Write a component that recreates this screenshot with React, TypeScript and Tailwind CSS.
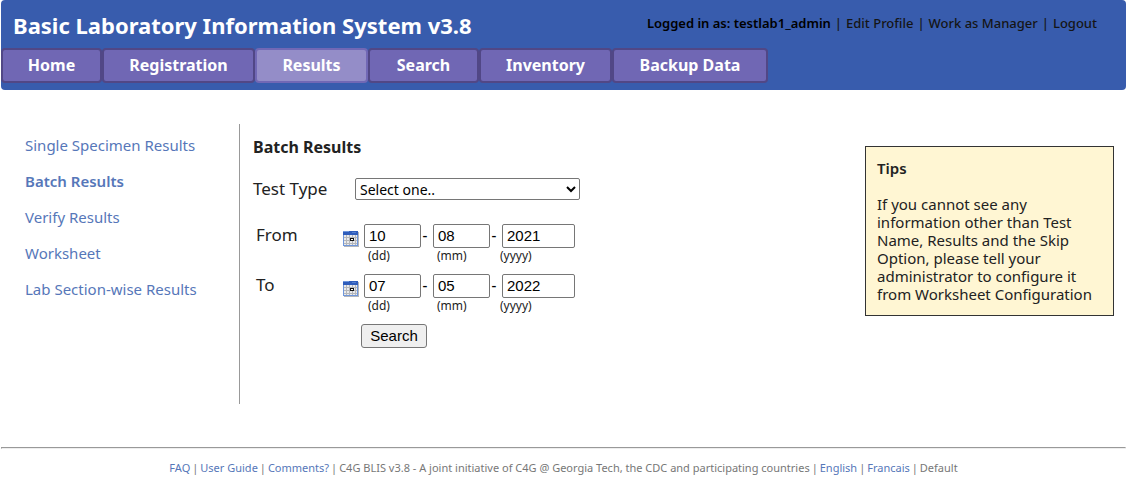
import React from "react";

const tabs = [
  { label: "Home", width: "w-[101px]" },
  { label: "Registration", width: "w-[153px]" },
  { label: "Results", width: "w-[113px]", active: true },
  { label: "Search", width: "w-[111px]" },
  { label: "Inventory", width: "w-[133px]" },
  { label: "Backup Data", width: "w-[156px]" },
];

const sideLinks = [
  "Single Specimen Results",
  "Batch Results",
  "Verify Results",
  "Worksheet",
  "Lab Section-wise Results",
];

function CalendarIcon() {
  return (
    <svg width="16" height="16" viewBox="0 0 16 16" shapeRendering="crispEdges" aria-hidden="true">
      <rect x="1" y="1" width="15" height="15" fill="#b4b6ba" />
      <rect x="0" y="0" width="15" height="15" fill="#6f97dc" />
      <rect x="1" y="4" width="13" height="10" fill="#e9eaec" />
      <rect x="0" y="0" width="15" height="4" fill="#2f5dbb" />
      <rect x="0" y="0" width="6" height="1" fill="#6f97dc" />
      <rect x="9" y="1" width="4" height="1" fill="#5580d0" />
      <path d="M1 6h13v1H1zM1 9h13v1H1zM1 12h13v1H1zM3 4h1v10H3zM6 4h1v10H6zM9 4h1v10H9zM12 4h1v10H12z" fill="#b4b6ba" />
      <rect x="7" y="7" width="4" height="3" fill="#111" />
      <rect x="8" y="8" width="2" height="1" fill="#fff" />
    </svg>
  );
}

function DatePart({ id, label, value, wide }: { id: string; label: string; value: string; wide?: boolean }) {
  return (
    <div className="flex flex-col">
      <input
        id={id}
        defaultValue={value}
        className={`${wide ? "w-[73px]" : "w-[57px]"} h-6 rounded-xs border border-[#767676] bg-white px-1 pb-0.5 font-['Liberation_Sans',sans-serif] text-[15px] text-black`}
      />
      <label htmlFor={id} className={`${wide ? "-ml-1" : "ml-0.5"} px-0.5 text-[12px] leading-4`}>
        {label}
      </label>
    </div>
  );
}

function DateRow({ name, id, parts }: { name: string; id: string; parts: [string, string, string] }) {
  return (
    <fieldset className="flex h-[50px] items-start">
      <legend className="float-left w-[90px] pl-[3px] text-[17px] leading-[22px]">{name}</legend>
      <button type="button" aria-label={`Pick ${name} date`} className="mt-[7px] mr-[5px]">
        <CalendarIcon />
      </button>
      <DatePart id={`${id}-day`} label="(dd)" value={parts[0]} />
      <span className="w-3 pr-1 text-center leading-[22px] font-medium text-black">-</span>
      <DatePart id={`${id}-month`} label="(mm)" value={parts[1]} />
      <span className="w-3 pr-1 text-center leading-[22px] font-medium text-black">-</span>
      <DatePart id={`${id}-year`} label="(yyyy)" value={parts[2]} wide />
    </fieldset>
  );
}

export default function App() {
  return (
    <div className="mr-[9px] bg-white pl-px font-['Noto_Sans',sans-serif] text-[15px] text-[#222]">
      <header className="rounded-sm bg-[#385cad] pb-[7px]">
        <div className="flex h-12 items-center justify-between pl-3 pr-[29px]">
          <h1 className="pt-[2px] text-[22px] font-bold text-white">Basic Laboratory Information System v3.8</h1>
          <div className="flex gap-1 text-[13px] font-medium text-[#151515]">
            <span className="font-semibold text-black">Logged in as: testlab1_admin</span>
            <span>|</span>
            <a href="#profile">Edit Profile</a>
            <span>|</span>
            <a href="#manager">Work as Manager</a>
            <span>|</span>
            <a href="#logout">Logout</a>
          </div>
        </div>
        <nav className="flex">
          {tabs.map((t) => (
            <a
              key={t.label}
              href="#tab"
              className={`${t.width} flex h-[35px] items-center justify-center rounded-sm border-2 pb-[2px] text-[16px] font-bold text-white ${
                t.active ? "border-[#7168b5] bg-[#948dc8]" : "border-[#514786] bg-[#7067b4]"
              }`}
            >
              {t.label}
            </a>
          ))}
        </nav>
      </header>

      <div className="mt-[34px] flex items-start">
        <nav className="flex h-[280px] w-[239px] flex-col border-r border-[#999] pl-6 pt-3 text-[#5677b9]">
          {sideLinks.map((l) => (
            <a key={l} href="#section" className={`h-9 leading-[18px] ${l === "Batch Results" ? "font-semibold" : ""}`}>
              {l}
            </a>
          ))}
        </nav>
        <main className="flex-1 pl-[13px] pt-[11px]">
          <h2 className="text-[16px] leading-6 font-bold">Batch Results</h2>
          <div className="mt-[18px] flex items-center">
            <label htmlFor="test-type" className="w-[102px] text-[17px] leading-6">
              Test Type
            </label>
            <select id="test-type" className="h-[22px] w-[225px] rounded-xs border border-[#767676] bg-white text-[14px] text-black">
              <option>Select one..</option>
            </select>
          </div>
          <div className="mt-[23px]">
            <DateRow name="From" id="from" parts={["10", "08", "2021"]} />
            <DateRow name="To" id="to" parts={["07", "05", "2022"]} />
          </div>
          <button
            type="button"
            className="ml-[108px] h-6 w-[66px] rounded-[3px] border border-[#767676] bg-[#efefef] font-['Liberation_Sans',sans-serif] text-[15px] text-black"
          >
            Search
          </button>
        </main>
        <aside className="mr-3 mt-[22px] w-[249px] border border-[#333] bg-[#fff6d3] px-[11px] py-3 leading-[18px]">
          <h3 className="mb-[18px] font-semibold">Tips</h3>
          <p>
            If you cannot see any information other than Test Name, Results and the Skip Option, please tell your
            administrator to configure it from Worksheet Configuration
          </p>
        </aside>
      </div>

      <hr className="mt-[43px] h-0.5 border border-t-[#999] border-r-[#eee] border-b-[#eee] border-l-[#999]" />
      <footer className="mt-[11px] flex justify-center gap-0.5 text-[11px] leading-4 text-[#777]">
        <a href="#faq" className="text-[#5677b9]">FAQ</a>
        <span>|</span>
        <a href="#guide" className="text-[#5677b9]">User Guide</a>
        <span>|</span>
        <a href="#comments" className="text-[#5677b9]">Comments?</a>
        <span>|</span>
        <span>C4G BLIS v3.8 - A joint initiative of C4G @ Georgia Tech, the CDC and participating countries</span>
        <span>|</span>
        <a href="#en" className="text-[#5677b9]">English</a>
        <span>|</span>
        <a href="#fr" className="text-[#5677b9]">Francais</a>
        <span>|</span>
        <span>Default</span>
      </footer>
    </div>
  );
}
